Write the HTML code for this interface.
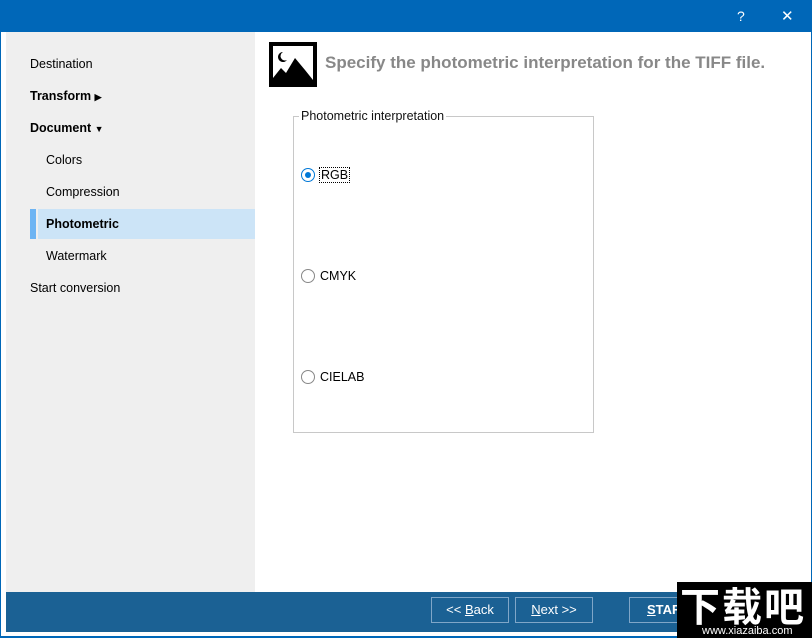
<!DOCTYPE html>
<html><head><style>
*{margin:0;padding:0;box-sizing:border-box}
body{width:812px;height:638px;position:relative;overflow:hidden;background:#fff;font-family:"Liberation Sans",sans-serif;font-size:12px;color:#000}
.a{position:absolute}
.nav{position:absolute;font-size:12.5px}
.b{font-weight:bold}
.btn{position:absolute;top:597px;height:26px;border:1px solid #7fa6c8;color:#fff;font-size:13px;text-align:center;line-height:24px}
.radio{position:absolute;width:14px;height:14px;border:1px solid #555;border-radius:50%;background:#fff}
</style></head><body>
<div class="a" style="left:0;top:0;width:812px;height:32px;background:#0067b8"></div>
<div class="a" style="left:737px;top:8px;color:#fff;font-size:14px">?</div>
<div class="a" style="left:781px;top:7px;color:#fff;font-size:15px;font-weight:normal">✕</div>
<div class="a" style="left:0;top:32px;width:1px;height:606px;background:#0067b8"></div>
<div class="a" style="left:811px;top:32px;width:1px;height:606px;background:#0067b8"></div>
<div class="a" style="left:0;top:636px;width:812px;height:2px;background:#0067b8"></div>
<div class="a" style="left:6px;top:32px;width:249px;height:560px;background:#efefef"></div>
<div class="a" style="left:30px;top:209px;width:6px;height:30px;background:#6db4f3"></div>
<div class="a" style="left:38px;top:209px;width:217px;height:30px;background:#cce4f7"></div>
<div class="nav" style="left:30px;top:57px">Destination</div>
<div class="nav b" style="left:30px;top:89px">Transform <span style="font-size:9px">▶</span></div>
<div class="nav b" style="left:30px;top:121px">Document <span style="font-size:9px">▼</span></div>
<div class="nav" style="left:46px;top:153px">Colors</div>
<div class="nav" style="left:46px;top:185px">Compression</div>
<div class="nav b" style="left:46px;top:217px">Photometric</div>
<div class="nav" style="left:46px;top:249px">Watermark</div>
<div class="nav" style="left:30px;top:281px">Start conversion</div>
<div class="a" style="left:269px;top:42px;width:48px;height:45px;background:#000"></div>
<svg class="a" style="left:269px;top:42px" width="48" height="45"><rect x="4" y="4" width="40" height="36" fill="#fff"/><path d="M4 40 L4 36 L12 26 L17 31 L26 16 L36 28 L44 38 L44 40Z" fill="#000"/><path d="M14 10 a5 5 0 1 0 4 8 a4 4 0 0 1 -4 -8Z" fill="#000"/></svg>
<div class="a" style="left:325px;top:53px;font-size:17px;font-weight:bold;color:#888">Specify the photometric interpretation for the TIFF file.</div>
<div class="a" style="left:293px;top:116px;width:301px;height:317px;border:1px solid #c8c8c8"></div>
<div class="a" style="left:299px;top:109px;background:#fff;padding:0 2px;font-size:12.5px;color:#111">Photometric interpretation</div>
<div class="radio" style="left:301px;top:168px;border-color:#0078d7"><div style="position:absolute;left:3px;top:3px;width:6px;height:6px;border-radius:50%;background:#0078d7"></div></div>
<div class="a" style="left:319px;top:167px;border:1px dotted #000;padding:0 1px;font-size:12.5px">RGB</div>
<div class="radio" style="left:301px;top:269px;border-color:#888"></div>
<div class="a" style="left:320px;top:269px;font-size:12.5px">CMYK</div>
<div class="radio" style="left:301px;top:370px;border-color:#888"></div>
<div class="a" style="left:320px;top:370px;font-size:12.5px">CIELAB</div>
<div class="a" style="left:6px;top:592px;width:800px;height:40px;background:#1b6194"></div>
<div class="btn" style="left:431px;width:78px">&lt;&lt; <u>B</u>ack</div>
<div class="btn" style="left:515px;width:78px"><u>N</u>ext &gt;&gt;</div>
<div class="btn" style="left:629px;width:80px;font-weight:bold;text-align:left;padding-left:17px"><u>S</u>TART</div>
<div class="a" style="left:677px;top:582px;width:135px;height:56px;background:#000"></div>
<div class="a" style="left:680px;top:580px;color:#fff;font-size:40px;font-weight:bold;font-family:'Noto Sans CJK SC',sans-serif;letter-spacing:2px;line-height:48px">下载吧</div>
<div class="a" style="left:702px;top:625px;color:#fff;font-size:11px">www.xiazaiba.com</div>
</body></html>
